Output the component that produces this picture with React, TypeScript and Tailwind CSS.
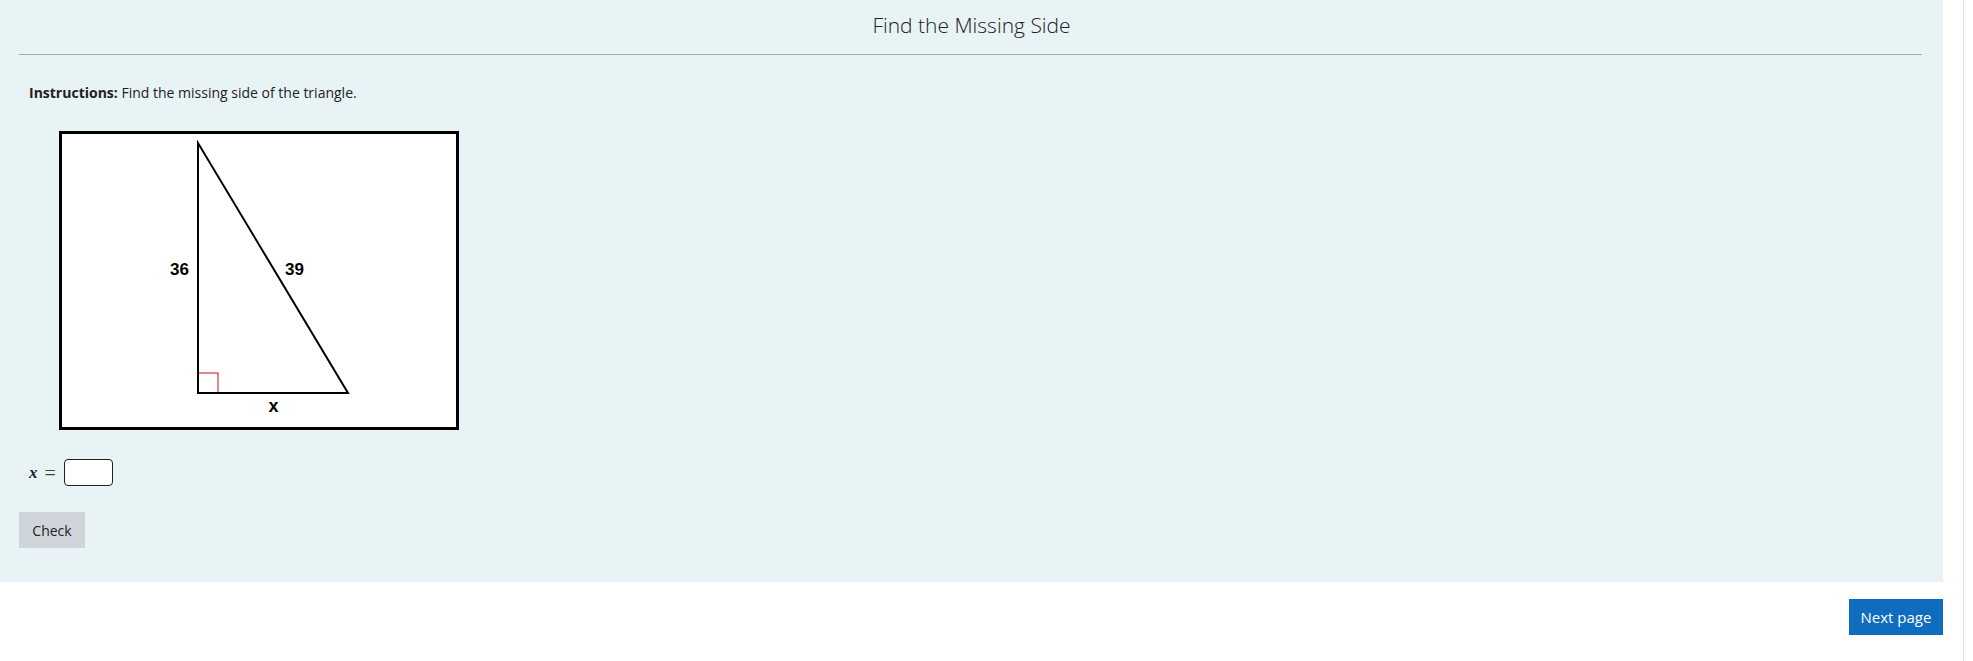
import React from "react";

function Triangle() {
  return (
    <svg width="394" height="293" viewBox="0 0 394 293" className="block">
      <rect x="0" y="0" width="394" height="293" fill="#ffffff" />
      <rect x="136" y="239" width="20" height="20" fill="none" stroke="#cc1111" strokeWidth="1" />
      <polygon points="136,9 136,259 286,259" fill="none" stroke="#000000" strokeWidth="2" strokeLinejoin="miter" />
      <text x="117.5" y="141" textAnchor="middle" fontFamily="'Liberation Sans', Arial, sans-serif" fontWeight="700" fontSize="17" fill="#000">36</text>
      <text x="232.5" y="141" textAnchor="middle" fontFamily="'Liberation Sans', Arial, sans-serif" fontWeight="700" fontSize="17" fill="#000">39</text>
      <text x="211.5" y="278" textAnchor="middle" fontFamily="'Liberation Sans', Arial, sans-serif" fontWeight="700" fontSize="18" fill="#000">x</text>
    </svg>
  );
}

export default function App() {
  return (
    <div className="w-[1973px] h-[661px] bg-white flex font-['Open_Sans',sans-serif] text-[#1d2125] overflow-hidden">
      <div className="w-[1943px] flex flex-col">
        <div className="h-[582px] bg-[#e7f3f5] flex flex-col">
          <h2 className="text-center text-[21px] font-light leading-[28px] pt-[11px] text-[#1d2125]">
            Find the Missing Side
          </h2>
          <div className="ml-[19px] mr-[21px] mt-[15px] h-px bg-[#9eabae]" />
          <p className="ml-[29px] mt-[28px] text-[14px] leading-[20px]">
            <span className="font-bold">Instructions:</span> Find the missing side of the triangle.
          </p>
          <div className="ml-[59px] mt-[28px] w-[400px] border-[3px] border-black bg-white">
            <Triangle />
          </div>
          <div className="ml-[29px] mt-[29px] flex items-center h-[27px]">
            <span className="font-['Liberation_Serif',serif] italic text-[17px] font-bold leading-none">x</span>
            <span className="font-['Liberation_Serif',serif] text-[20px] leading-none ml-[7px] text-[#444]">=</span>
            <div className="ml-[8px] w-[49px] h-[27px] rounded-[4px] border border-[#1d2125] bg-white" />
          </div>
          <button className="ml-[19px] mt-[26px] w-[66px] h-[36px] bg-[#ced4da] text-[14px] text-[#1d2125] text-center self-start">
            Check
          </button>
        </div>
        <div className="flex justify-end mt-[17px]">
          <button className="w-[94px] h-[36px] bg-[#0f6cbf] text-white text-[15px] leading-none">
            Next page
          </button>
        </div>
      </div>
      <div className="ml-[20px] w-px h-full bg-[#dee2e6]" />
    </div>
  );
}
